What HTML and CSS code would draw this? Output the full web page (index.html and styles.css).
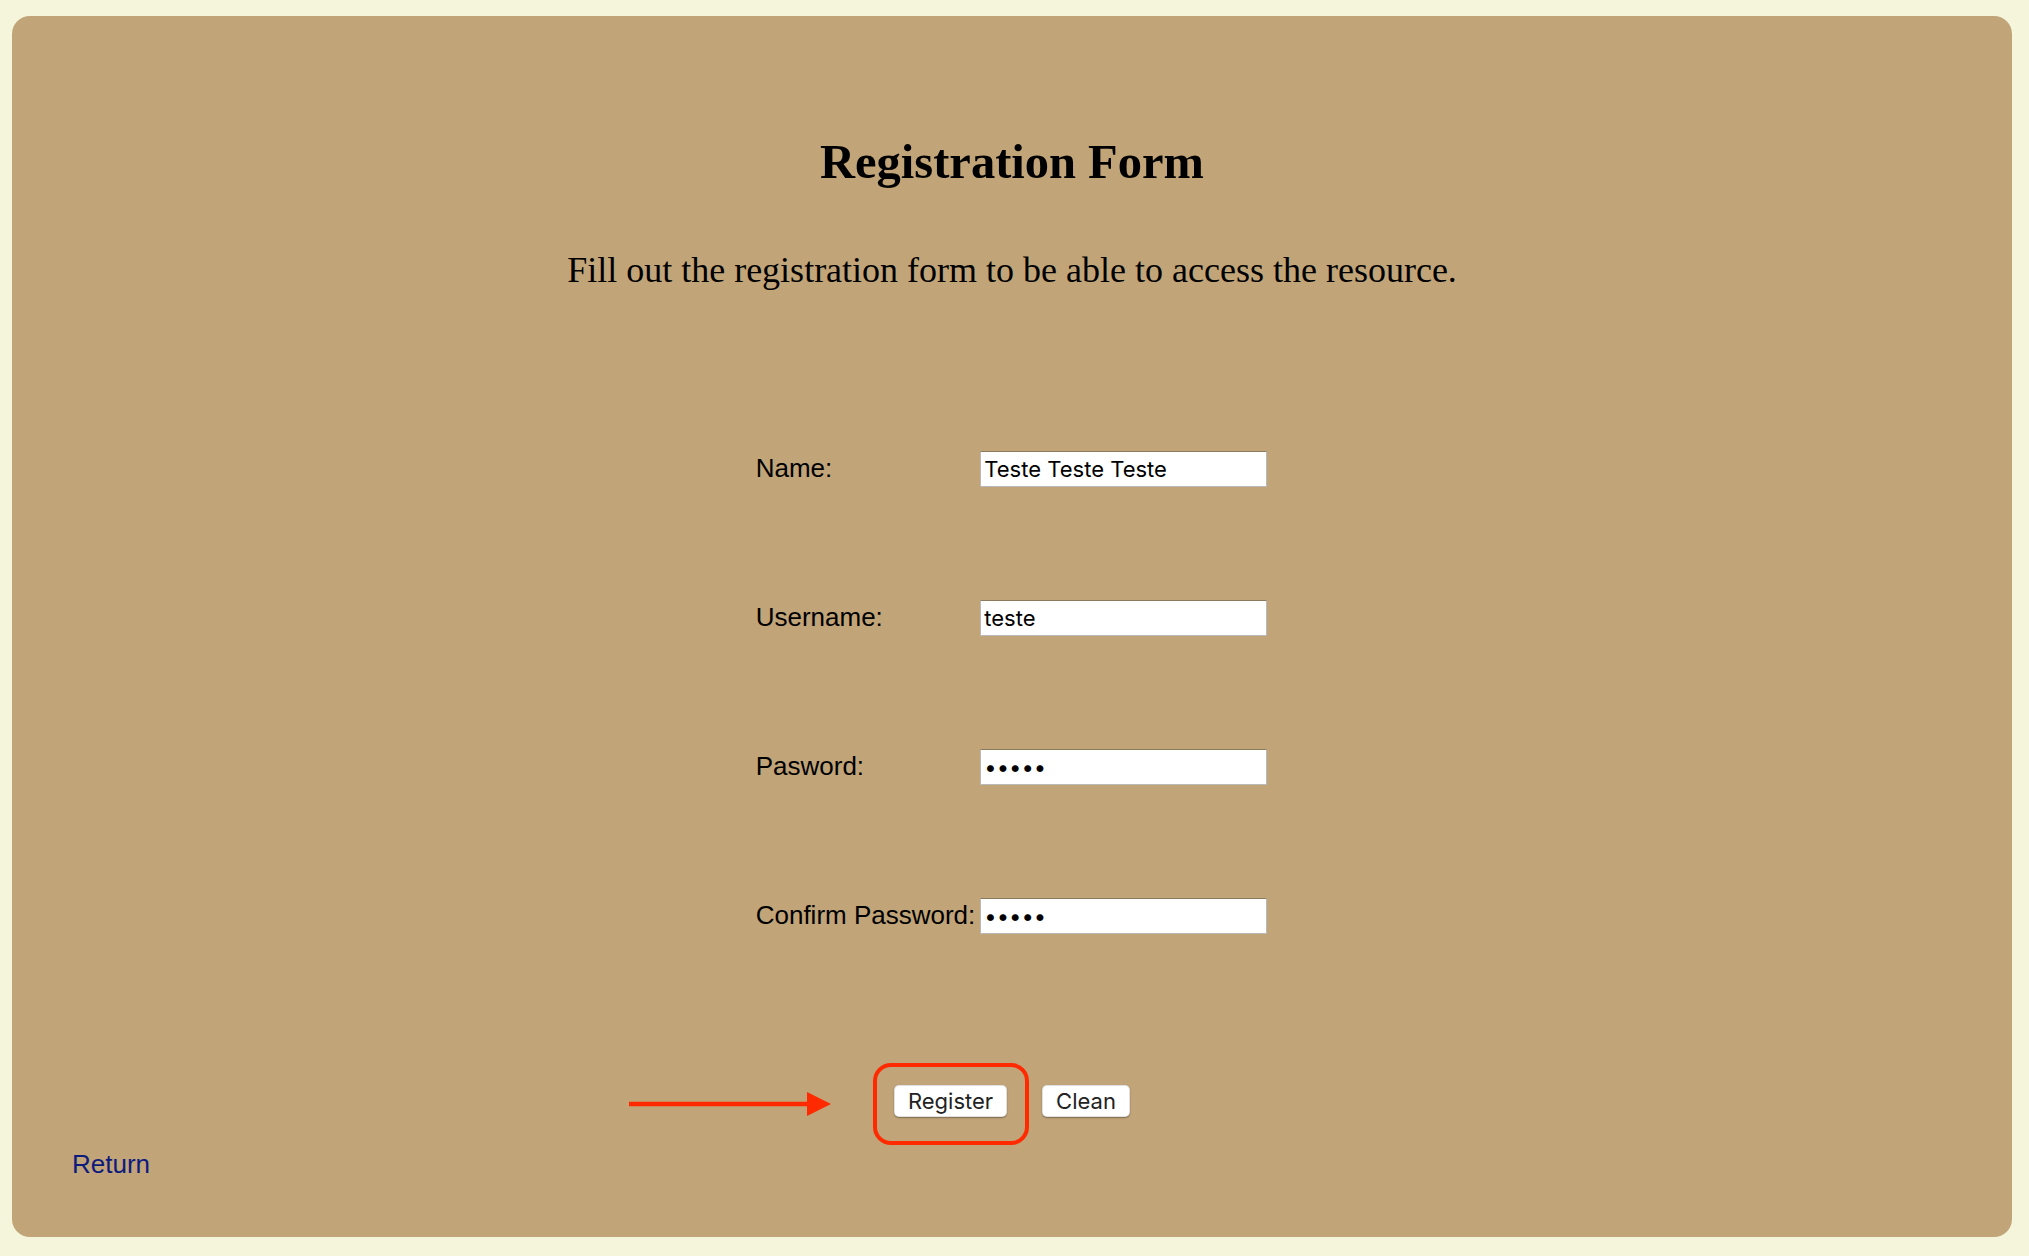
FILE: index.html
```html
<!DOCTYPE html>
<html lang="en">
<head>
<meta charset="utf-8">
<title>Registration Form</title>
<link rel="stylesheet" href="styles.css">
</head>
<body>
<div class="panel">
  <h1 class="title">Registration Form</h1>
  <p class="intro">Fill out the registration form to be able to access the resource.</p>
  <form class="form">
    <div class="fields">
      <label class="label" for="name">Name:</label>
      <input class="field" id="name" type="text" value="Teste Teste Teste">
      <label class="label" for="user">Username:</label>
      <input class="field" id="user" type="text" value="teste">
      <label class="label" for="pw">Pasword:</label>
      <input class="field" id="pw" type="password" value="teste">
      <label class="label" for="pw2">Confirm Password:</label>
      <input class="field" id="pw2" type="password" value="teste">
    </div>
    <div class="actions">
      <span class="highlight-wrap">
        <button class="btn btn-register" type="button">Register</button>
        <span class="highlight-box"></span>
        <svg class="highlight-arrow" width="202" height="24" viewBox="0 0 202 24">
          <line x1="0" y1="12" x2="180" y2="12" stroke="#ff2a00" stroke-width="4.5"/>
          <polygon points="178,0 202,12 178,24" fill="#ff2a00"/>
        </svg>
      </span>
      <button class="btn btn-clean" type="reset">Clean</button>
    </div>
  </form>
  <div class="return"><a class="return-link" href="#">Return</a></div>
</div>
</body>
</html>
```

FILE: styles.css
```css
html, body {
  margin: 0;
  padding: 0;
}
body {
  background: #f5f5dc;
  width: 2029px;
  height: 1256px;
  overflow: hidden;
  padding-top: 16px;
  box-sizing: border-box;
}
.panel {
  margin: 0 17px 0 12px;
  height: 1221px;
  box-sizing: border-box;
  background: #c1a478;
  border-radius: 18px;
  padding-top: 118px;
  display: flex;
  flex-direction: column;
}
.title {
  margin: 0;
  font-family: "Liberation Serif", "Times New Roman", serif;
  font-size: 48.5px;
  font-weight: bold;
  line-height: normal;
  text-align: center;
  color: #000;
}
.intro {
  margin: 60px 0 0;
  font-family: "Liberation Serif", "Times New Roman", serif;
  font-size: 36px;
  line-height: normal;
  text-align: center;
  color: #000;
}
.form {
  margin: 160px 0 0;
  display: flex;
  flex-direction: column;
  align-items: center;
}
.fields {
  display: grid;
  grid-template-columns: auto 287px;
  column-gap: 5px;
  row-gap: 113px;
  align-items: baseline;
  margin-left: -1px;
}
.label {
  font-family: "Liberation Sans", Arial, sans-serif;
  font-size: 26px;
  line-height: normal;
  color: #000;
}
.field {
  width: 287px;
  height: 36px;
  box-sizing: border-box;
  margin: 0;
  padding: 0 3px;
  background: #fff;
  border: 1px solid #b9b9b9;
  border-top-color: #8c7a5e;
  border-radius: 0;
  font-family: Inter, "Noto Sans", sans-serif;
  font-size: 22px;
  color: #000;
  outline: none;
}
.actions {
  margin-top: 151px;
  display: flex;
  gap: 35px;
  align-items: center;
}
.highlight-wrap {
  position: relative;
  display: flex;
}
.btn {
  height: 32px;
  box-sizing: border-box;
  margin: 0;
  padding: 0;
  background: #fff;
  border: 1px solid rgba(0, 0, 0, 0.12);
  border-radius: 5px;
  box-shadow: 0 1px 1.5px rgba(0, 0, 0, 0.35);
  font-family: Inter, "Noto Sans", sans-serif;
  font-size: 22px;
  color: #222;
  line-height: 1;
}
.btn-register {
  width: 113px;
}
.btn-clean {
  width: 88px;
}
.highlight-box {
  position: absolute;
  left: -21px;
  top: -22px;
  width: 156px;
  height: 82px;
  box-sizing: border-box;
  border: 4.5px solid #ff2a00;
  border-radius: 18px;
  pointer-events: none;
}
.highlight-arrow {
  position: absolute;
  left: -265px;
  top: 7px;
}
.return {
  margin-top: 32px;
  padding-left: 60px;
}
.return-link {
  font-family: "Liberation Sans", Arial, sans-serif;
  font-size: 26px;
  line-height: normal;
  color: #0d1b7d;
  text-decoration: none;
}
```
